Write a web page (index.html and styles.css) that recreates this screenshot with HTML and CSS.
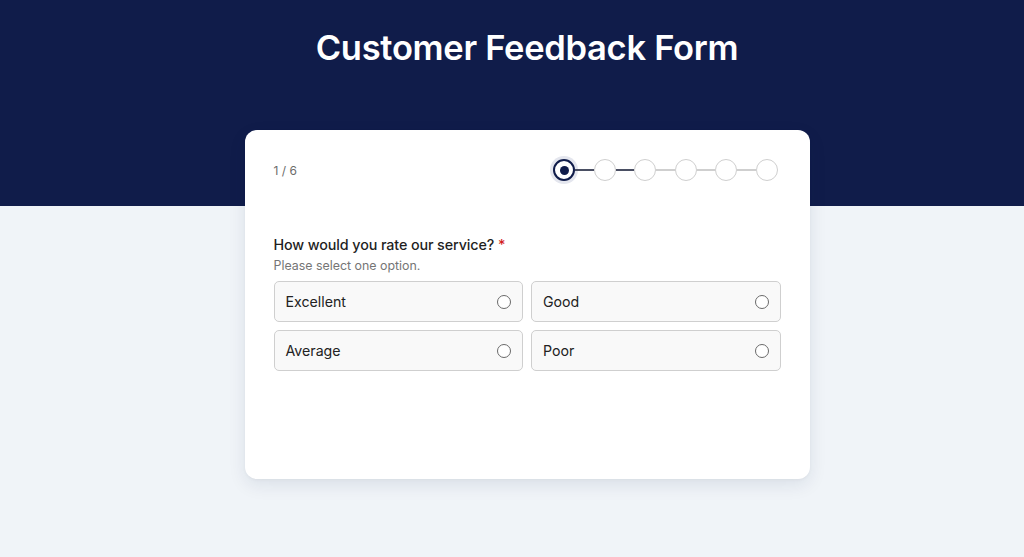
FILE: index.html
```html
<!DOCTYPE html>
<html>
<head>
<meta charset="utf-8">
<link rel="stylesheet" href="styles.css">
</head>
<body>
<div class="hero">
  <h1 class="title">Customer Feedback Form</h1>
</div>
<main class="main">
  <section class="card">
    <div class="top">
      <span class="count">1 / 6</span>
      <div class="steps">
        <span class="step active"><span class="dot"></span></span>
        <span class="line done"></span>
        <span class="step"></span>
        <span class="line done"></span>
        <span class="step"></span>
        <span class="line"></span>
        <span class="step"></span>
        <span class="line"></span>
        <span class="step"></span>
        <span class="line"></span>
        <span class="step"></span>
      </div>
    </div>
    <div class="question">
      <div class="label">How would you rate our service? <span class="req">*</span></div>
      <div class="hint">Please select one option.</div>
      <div class="options">
        <label class="option"><span>Excellent</span><span class="radio"></span></label>
        <label class="option"><span>Good</span><span class="radio"></span></label>
        <label class="option"><span>Average</span><span class="radio"></span></label>
        <label class="option"><span>Poor</span><span class="radio"></span></label>
      </div>
    </div>
  </section>
</main>
</body>
</html>
```
FILE: styles.css
```css
* { box-sizing: border-box; }
html, body { margin: 0; padding: 0; }
body {
  background: #f0f4f8;
  font-family: Inter, "Noto Sans", sans-serif;
  color: #1f1f1f;
  height: 557px;
  overflow: hidden;
}
.hero {
  background: #101c4a;
  height: 206px;
  display: flex;
  justify-content: center;
  padding-top: 27px;
  padding-left: 30px;
}
.title {
  margin: 0;
  color: #fff;
  font-size: 34.5px;
  font-weight: 600;
  line-height: 42px;
  letter-spacing: -0.3px;
}
.main {
  display: flex;
  justify-content: center;
  margin-top: -76px;
  padding-left: 30px;
}
.card {
  width: 565px;
  height: 349px;
  background: #fff;
  border-radius: 12px;
  box-shadow: 0 6px 18px rgba(16, 28, 74, 0.09), 0 1px 3px rgba(0,0,0,0.04);
  padding: 28px 29px 0 29px;
}
.top {
  display: flex;
  justify-content: space-between;
  align-items: center;
  height: 24px;
  padding-right: 3px;
}
.count {
  font-size: 12px;
  color: #6b6b6b;
}
.steps {
  display: flex;
  align-items: center;
}
.step {
  width: 22px;
  height: 22px;
  border-radius: 50%;
  border: 1.5px solid #cfcfcf;
  background: #fff;
  display: flex;
  align-items: center;
  justify-content: center;
  flex: none;
}
.step.active {
  border: 2px solid #101c4a;
  box-shadow: 0 0 0 3px #e4e6ee;
}
.dot {
  width: 9px;
  height: 9px;
  border-radius: 50%;
  background: #101c4a;
}
.line {
  width: 18.5px;
  height: 2px;
  background: #cfcfcf;
  flex: none;
}
.line.done { background: #4a4f63; }
.question {
  margin-top: 53px;
}
.label {
  font-size: 14.3px;
  font-weight: 500;
  color: #1f1f1f;
  line-height: 20px;
  letter-spacing: -0.1px;
}
.req { color: #d21c1c; }
.hint {
  font-size: 12.4px;
  color: #757575;
  margin-top: 2px;
  line-height: 18px;
}
.options {
  display: grid;
  grid-template-columns: 1fr 1fr;
  gap: 8px;
  margin-top: 6px;
}
.option {
  height: 41px;
  border: 1px solid #cfcfcf;
  border-radius: 5px;
  background: #f9f9f9;
  display: flex;
  align-items: center;
  justify-content: space-between;
  padding: 0 11px 0 11px;
  font-size: 14.2px;
  color: #222;
}
.radio {
  width: 14px;
  height: 14px;
  border-radius: 50%;
  border: 1.3px solid #6a6a6a;
  background: #fff;
}
```
